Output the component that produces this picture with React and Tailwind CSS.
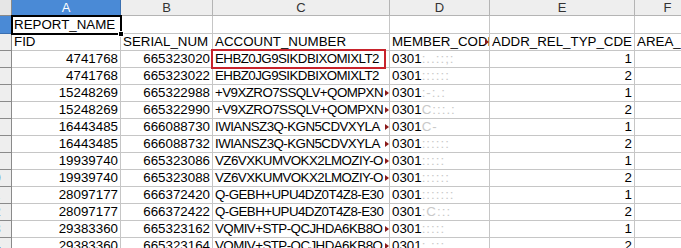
const rows = [
  ['4741768', '665323020', 'EHBZ0JG9SIKDBIXOMIXLT2', false, ':..::;:', '1'],
  ['4741768', '665323022', 'EHBZ0JG9SIKDBIXOMIXLT2', false, '::::::', '2'],
  ['15248269', '665322988', '+V9XZRO7SSQLV+QOMPXN', true, ':-:.:', '1'],
  ['15248269', '665322990', '+V9XZRO7SSQLV+QOMPXN', true, 'C:::.:', '2'],
  ['16443485', '666088730', 'IWIANSZ3Q-KGN5CDVXYLA', true, 'C-', '1'],
  ['16443485', '666088732', 'IWIANSZ3Q-KGN5CDVXYLA', true, '::::::', '2'],
  ['19939740', '665323086', 'VZ6VXKUMVOKX2LMOZIY-O', true, ':::::', '1'],
  ['19939740', '665323088', 'VZ6VXKUMVOKX2LMOZIY-O', true, '::::::', '2'],
  ['28097177', '666372420', 'Q-GEBH+UPU4DZ0T4Z8-E30', false, ':::::::', '1'],
  ['28097177', '666372422', 'Q-GEBH+UPU4DZ0T4Z8-E30', false, ':C:::', '2'],
  ['29383360', '665323162', 'VQMIV+STP-QCJHDA6KB8O', true, ':::::', '1'],
  ['29383360', '665323164', 'VQMIV+STP-QCJHDA6KB8O', true, ':.:::', '2'],
];

const grid = 'grid grid-cols-[12px_109px_92px_177px_100px_145px_66px]';

function Clip() {
  return (
    <span className="absolute right-0 top-1/2 -translate-y-1/2 w-0 h-0 border-y-[3.5px] border-y-transparent border-l-[4px] border-l-[#8b1a1a]" />
  );
}

function Cell({ children, right, clip, className = '' }) {
  return (
    <div
      className={`relative border-r border-b border-[#c6c6c6] px-[2px] whitespace-nowrap overflow-hidden leading-[16px] ${right ? 'text-right' : ''} ${className}`}
    >
      {children}
      {clip && <Clip />}
    </div>
  );
}

function RowHead({ n, active }) {
  return (
    <div className={`relative border-r border-b overflow-hidden ${active ? 'bg-[#4a8ad6] border-[#3a6fb0]' : 'bg-[#eeeeee] border-[#8a8a8a]'}`}>
      <div className="absolute right-[-1px] w-[36px] text-center text-[12px] leading-[16px] text-[#4f6f99]">{n}</div>
    </div>
  );
}

export default function App() {
  return (
    <div className="relative w-[681px] h-[248px] overflow-hidden bg-white font-['Liberation_Sans',Arial,sans-serif] text-[13.33px] text-black">
      <div className={`${grid} h-[16px] text-[13px] leading-[15px] text-[#333]`}>
        <div className="bg-[#e6e6e6] border-r border-b border-[#8a8a8a]" />
        <div className="bg-[#4a8ad6] border-r border-b border-[#3a6fb0] text-center text-white">A</div>
        <div className="bg-[#eeeeee] border-r border-b border-[#b4b4b4] text-center">B</div>
        <div className="bg-[#eeeeee] border-r border-b border-[#b4b4b4] text-center">C</div>
        <div className="bg-[#eeeeee] border-r border-b border-[#b4b4b4] text-center">D</div>
        <div className="bg-[#eeeeee] border-r border-b border-[#b4b4b4] text-center">E</div>
        <div className="bg-[#eeeeee] border-r border-b border-[#b4b4b4] text-center">F</div>
      </div>

      <div className={`${grid} h-[18px] leading-[17px]`}>
        <RowHead n={1} active />
        <Cell className="leading-[17px]">REPORT_NAME</Cell>
        <Cell />
        <Cell />
        <Cell />
        <Cell />
        <Cell />
      </div>

      <div className={`${grid} h-[17px]`}>
        <RowHead n={2} />
        <Cell>FID</Cell>
        <Cell>SERIAL_NUM</Cell>
        <Cell>ACCOUNT_NUMBER</Cell>
        <Cell clip>MEMBER_CODE</Cell>
        <Cell>ADDR_REL_TYP_CDE</Cell>
        <Cell>AREA_CODE</Cell>
      </div>

      {rows.map((r, i) => (
        <div key={i} className={`${grid} h-[17px]`}>
          <RowHead n={i + 3} />
          <Cell right>{r[0]}</Cell>
          <Cell right>{r[1]}</Cell>
          <Cell clip={r[3]} className="tracking-[-0.55px]">{r[2]}</Cell>
          <Cell>
            0301<span className="text-[#c9c9c9] tracking-[1px]">{r[4]}</span>
          </Cell>
          <Cell right>{r[5]}</Cell>
          <Cell />
        </div>
      ))}

      {/* cell cursor on A1 */}
      <div className="absolute left-[11px] top-[15px] w-[111px] h-[20px] border-2 border-black pointer-events-none" />
      <div className="absolute left-[118px] top-[31px] w-[6px] h-[6px] bg-black border border-white" />

      {/* red highlight around C3 */}
      <div className="absolute left-[211px] top-[49px] w-[175px] h-[20px] border-2 border-[#c8232c] pointer-events-none" />
    </div>
  );
}
